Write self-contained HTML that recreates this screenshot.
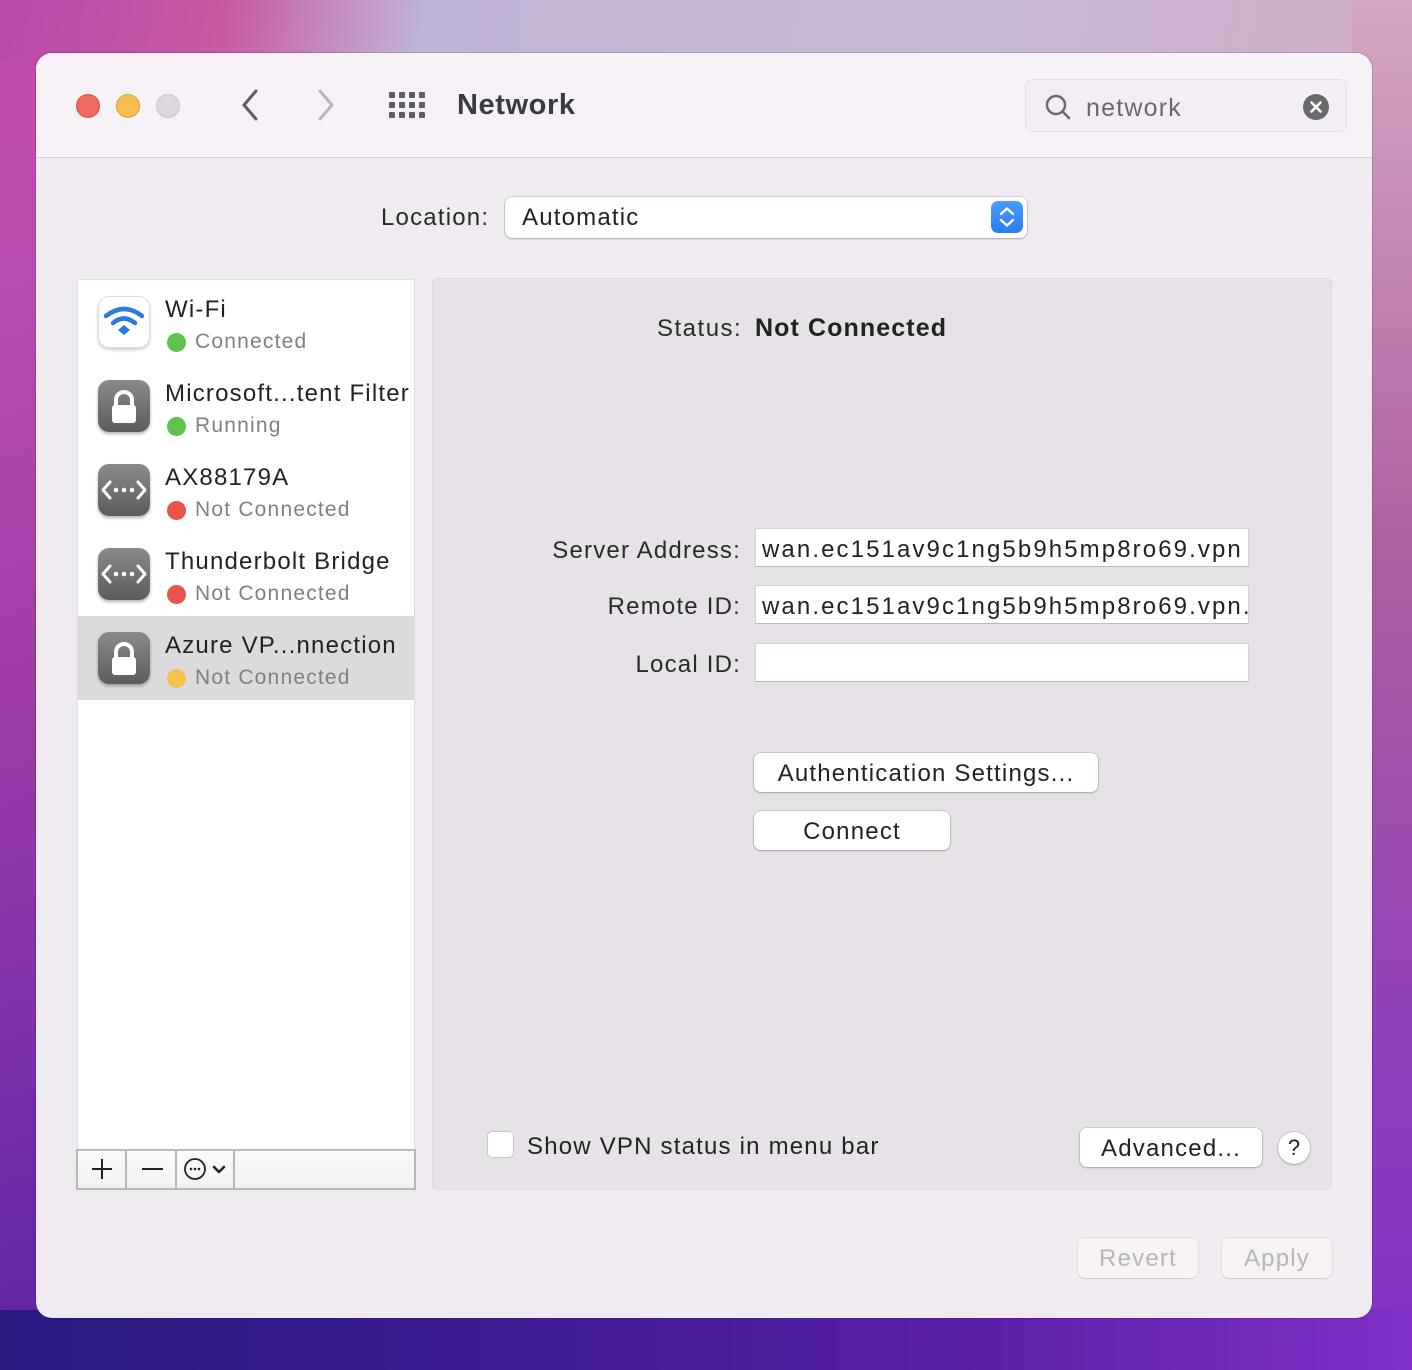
<!DOCTYPE html>
<html><head><meta charset="utf-8"><style>
*{margin:0;padding:0;box-sizing:border-box}
body{width:1412px;height:1370px;overflow:hidden;position:relative;font-family:"Liberation Sans",sans-serif;color:#222;letter-spacing:1.2px;
background:linear-gradient(160deg,#c24aa8 0%,#b84db0 15%,#9a3aa8 40%,#6a2aa8 65%,#4a20a0 85%,#3a1a90 100%)}
.bgtop{position:absolute;left:0;top:0;width:1412px;height:60px;background:linear-gradient(100deg,#b849ad 0%,#c85aa0 16%,#c0b4d6 30%,#c8b8d4 70%,#d0acc8 100%)}
.bgr{position:absolute;right:0;top:0;width:60px;height:1370px;background:linear-gradient(180deg,#d4a8c4,#b060a0 40%,#9040b8 75%,#8030c8)}
.bgb{position:absolute;left:0;bottom:0;width:1412px;height:60px;background:linear-gradient(90deg,#2a1a80,#3a1a90 30%,#5a20a8 70%,#8030c8)}
.win{position:absolute;left:36px;top:53px;width:1336px;height:1265px;border-radius:16px;background:#efebf0;overflow:hidden;box-shadow:0 0 0 1px rgba(0,0,0,.15)}
.tb{position:absolute;left:0;top:0;width:100%;height:105px;background:#f6f0f7;border-bottom:1px solid #d4cfd6}
.abs{position:absolute}
.dot{position:absolute;width:24px;height:24px;border-radius:50%;top:41px}
.t{position:absolute;white-space:nowrap}
.sb{position:absolute;left:41px;top:226px;width:338px;height:911px;background:#fff;border:1px solid #e0dde2}
.row{position:absolute;left:0;width:336px;height:84px}
.ic{position:absolute;left:20px;top:16px;width:52px;height:52px;border-radius:11px;background:linear-gradient(#8a8a8c,#5c5c5e);box-shadow:0 2px 3px rgba(0,0,0,.3)}
.nm{position:absolute;left:87px;top:16px;font-size:24px;color:#222;white-space:nowrap}
.st{position:absolute;left:87px;top:50px;font-size:21px;color:#808080;white-space:nowrap;padding-left:30px}
.st i{position:absolute;left:2px;top:3px;width:19px;height:19px;border-radius:50%}
.panel{position:absolute;left:396px;top:225px;width:900px;height:912px;background:#e6e2e7;border:1px solid #dcd8dd;border-radius:6px}
.fld{position:absolute;left:322px;width:494px;height:39px;background:#fff;border:1px solid #d5d2d6;border-bottom-color:#bdbabd;font-size:24px;padding:7px 6px;overflow:hidden;white-space:nowrap;color:#222;letter-spacing:2.1px}
.lbl{position:absolute;right:590px;font-size:24px;color:#2a2a2a;white-space:nowrap}
.btn{position:absolute;background:#fff;border-radius:7px;box-shadow:0 0 0 1px rgba(0,0,0,.1),0 1px 2px rgba(0,0,0,.2);font-size:24px;text-align:center;color:#222}
</style></head><body>
<div class="bgtop"></div><div class="bgr"></div><div class="bgb"></div>
<div class="win">
 <div class="tb">
  <div class="dot" style="left:40px;background:#ec6a5e;border:1px solid #d25548"></div>
  <div class="dot" style="left:80px;background:#f5bf4f;border:1px solid #d6a03a"></div>
  <div class="dot" style="left:120px;background:#dcd8dd;border:1px solid #c8c4c9"></div>
  <svg class="abs" style="left:200px;top:34px" width="30" height="36"><path d="M20 4 L8 18 L20 32" stroke="#5e5c60" stroke-width="3" fill="none" stroke-linecap="round" stroke-linejoin="round"/></svg>
  <svg class="abs" style="left:276px;top:34px" width="30" height="36"><path d="M8 4 L20 18 L8 32" stroke="#b8b5ba" stroke-width="3" fill="none" stroke-linecap="round" stroke-linejoin="round"/></svg>
  <svg class="abs" style="left:353px;top:39px" width="40" height="30" fill="#5e5c60">
   <rect x="0" y="0" width="6" height="6" rx="1"/><rect x="10" y="0" width="6" height="6" rx="1"/><rect x="20" y="0" width="6" height="6" rx="1"/><rect x="30" y="0" width="6" height="6" rx="1"/>
   <rect x="0" y="10" width="6" height="6" rx="1"/><rect x="10" y="10" width="6" height="6" rx="1"/><rect x="20" y="10" width="6" height="6" rx="1"/><rect x="30" y="10" width="6" height="6" rx="1"/>
   <rect x="0" y="20" width="6" height="6" rx="1"/><rect x="10" y="20" width="6" height="6" rx="1"/><rect x="20" y="20" width="6" height="6" rx="1"/><rect x="30" y="20" width="6" height="6" rx="1"/></svg>
  <div class="t" style="left:421px;top:36px;font-size:29px;font-weight:bold;color:#3c3a3e;letter-spacing:0.6px">Network</div>
  <div class="abs" style="left:989px;top:26px;width:322px;height:53px;border:1px solid #e2dce4;border-radius:8px;background:#f3edf4"></div>
  <svg class="abs" style="left:1008px;top:40px" width="30" height="30"><circle cx="12" cy="12" r="9" stroke="#6a686c" stroke-width="2.4" fill="none"/><path d="M18.5 18.5 L25 25" stroke="#6a686c" stroke-width="2.6" stroke-linecap="round"/></svg>
  <div class="t" style="left:1050px;top:41px;font-size:25px;color:#6a686c">network</div>
  <svg class="abs" style="left:1266px;top:40px" width="28" height="28"><circle cx="14" cy="14" r="13" fill="#6a686c"/><path d="M9.5 9.5 L18.5 18.5 M18.5 9.5 L9.5 18.5" stroke="#fff" stroke-width="2.6" stroke-linecap="round"/></svg>
 </div>
 <div class="t" style="left:345px;top:151px;font-size:24px;color:#2a2a2a">Location:</div>
 <div class="abs" style="left:469px;top:144px;width:522px;height:41px;background:#fff;border-radius:7px;box-shadow:0 0 0 1px rgba(0,0,0,.1),0 1px 2px rgba(0,0,0,.2)"></div>
 <div class="t" style="left:486px;top:151px;font-size:24px;color:#222">Automatic</div>
 <div class="abs" style="left:955px;top:148px;width:32px;height:32px;border-radius:7px;background:linear-gradient(#4a9cff,#2a7cf2)"></div>
 <svg class="abs" style="left:955px;top:148px" width="32" height="32"><path d="M10 13 L16 7.5 L22 13 M10 19 L16 24.5 L22 19" stroke="#fff" stroke-width="2.4" fill="none" stroke-linecap="round" stroke-linejoin="round"/></svg>

 <div class="sb">
  <div class="row" style="top:0">
   <div class="ic" style="background:#fff;border:1px solid #ddd;box-shadow:0 2px 3px rgba(0,0,0,.2)"></div>
   <svg class="abs" style="left:24px;top:24px" width="44" height="38"><path d="M4 12 Q22 -2 40 12" stroke="#2a7ae6" stroke-width="4.5" fill="none" stroke-linecap="round"/><path d="M11 19 Q22 10 33 19" stroke="#2a7ae6" stroke-width="4.5" fill="none" stroke-linecap="round"/><path d="M16 26 L22 21 L28 26 L22 31Z" fill="#2a7ae6"/></svg>
   <div class="nm">Wi-Fi</div><div class="st"><i style="background:#5ec34d"></i>Connected</div>
  </div>
  <div class="row" style="top:84px">
   <div class="ic"></div>
   <svg class="abs" style="left:20px;top:16px" width="52" height="52"><path d="M18 26 V20 a8 8 0 0 1 16 0 V26" stroke="#fff" stroke-width="4" fill="none"/><rect x="14" y="25" width="24" height="18" rx="3" fill="#fff"/></svg>
   <div class="nm">Microsoft...tent Filter</div><div class="st"><i style="background:#5ec34d"></i>Running</div>
  </div>
  <div class="row" style="top:168px">
   <div class="ic"></div>
   <svg class="abs" style="left:20px;top:16px" width="52" height="52"><path d="M12 18 L5 26 L12 34 M40 18 L47 26 L40 34" stroke="#fff" stroke-width="3" fill="none" stroke-linecap="round" stroke-linejoin="round"/><circle cx="18" cy="26" r="2.3" fill="#fff"/><circle cx="26" cy="26" r="2.3" fill="#fff"/><circle cx="34" cy="26" r="2.3" fill="#fff"/></svg>
   <div class="nm">AX88179A</div><div class="st"><i style="background:#e8534a"></i>Not Connected</div>
  </div>
  <div class="row" style="top:252px">
   <div class="ic"></div>
   <svg class="abs" style="left:20px;top:16px" width="52" height="52"><path d="M12 18 L5 26 L12 34 M40 18 L47 26 L40 34" stroke="#fff" stroke-width="3" fill="none" stroke-linecap="round" stroke-linejoin="round"/><circle cx="18" cy="26" r="2.3" fill="#fff"/><circle cx="26" cy="26" r="2.3" fill="#fff"/><circle cx="34" cy="26" r="2.3" fill="#fff"/></svg>
   <div class="nm">Thunderbolt Bridge</div><div class="st"><i style="background:#e8534a"></i>Not Connected</div>
  </div>
  <div class="row" style="top:336px;background:#dcdadc">
   <div class="ic"></div>
   <svg class="abs" style="left:20px;top:16px" width="52" height="52"><path d="M18 26 V20 a8 8 0 0 1 16 0 V26" stroke="#fff" stroke-width="4" fill="none"/><rect x="14" y="25" width="24" height="18" rx="3" fill="#fff"/></svg>
   <div class="nm">Azure VP...nnection</div><div class="st"><i style="background:#f4c04e"></i>Not Connected</div>
  </div>
 </div>
 <div class="abs" style="left:40px;top:1096px;width:340px;height:41px;background:linear-gradient(#fafafa,#f2f2f2);border:2px solid #b8b8b8"></div>
 <div class="abs" style="left:89px;top:1096px;width:2px;height:41px;background:#b8b8b8"></div>
 <div class="abs" style="left:139px;top:1096px;width:2px;height:41px;background:#b8b8b8"></div>
 <div class="abs" style="left:197px;top:1096px;width:2px;height:41px;background:#b8b8b8"></div>
 <svg class="abs" style="left:54px;top:1104px" width="24" height="24"><path d="M12 2 V22 M2 12 H22" stroke="#222" stroke-width="2"/></svg>
 <svg class="abs" style="left:104px;top:1104px" width="24" height="24"><path d="M2 12 H23" stroke="#222" stroke-width="2"/></svg>
 <svg class="abs" style="left:146px;top:1103px" width="50" height="26"><circle cx="13" cy="13" r="10" stroke="#222" stroke-width="1.8" fill="none"/><circle cx="9" cy="13" r="1.3" fill="#222"/><circle cx="13" cy="13" r="1.3" fill="#222"/><circle cx="17" cy="13" r="1.3" fill="#222"/><path d="M32 11 L37 16 L42 11" stroke="#222" stroke-width="2.6" fill="none" stroke-linecap="round" stroke-linejoin="round"/></svg>

 <div class="panel">
  <div class="t" style="left:224px;top:36px;font-size:24px;color:#2a2a2a;letter-spacing:1.5px">Status:</div>
  <div class="t" style="left:322px;top:35px;font-size:25px;font-weight:bold;color:#222;letter-spacing:1.1px">Not Connected</div>
  <div class="lbl" style="top:258px">Server Address:</div>
  <div class="fld" style="top:249px">wan.ec151av9c1ng5b9h5mp8ro69.vpn</div>
  <div class="lbl" style="top:314px">Remote ID:</div>
  <div class="fld" style="top:306px">wan.ec151av9c1ng5b9h5mp8ro69.vpn.azure</div>
  <div class="lbl" style="top:372px">Local ID:</div>
  <div class="fld" style="top:364px"></div>
  <div class="btn" style="left:321px;top:474px;width:344px;height:39px;line-height:41px">Authentication Settings...</div>
  <div class="btn" style="left:321px;top:532px;width:196px;height:39px;line-height:41px">Connect</div>
  <div class="abs" style="left:54px;top:852px;width:27px;height:27px;border-radius:5px;background:#fff;border:1px solid #c9c6ca"></div>
  <div class="t" style="left:94px;top:854px;font-size:24px;color:#222">Show VPN status in menu bar</div>
  <div class="btn" style="left:647px;top:849px;width:182px;height:39px;line-height:41px">Advanced...</div>
  <div class="btn" style="left:845px;top:853px;width:32px;height:32px;border-radius:50%;line-height:32px;font-size:22px;letter-spacing:0">?</div>
 </div>
 <div class="btn" style="left:1042px;top:1185px;width:120px;height:40px;line-height:42px;background:#f6f2f6;color:#b8b6b9;box-shadow:0 0 0 1px rgba(0,0,0,.06),0 1px 1px rgba(0,0,0,.08)">Revert</div>
 <div class="btn" style="left:1186px;top:1185px;width:110px;height:40px;line-height:42px;background:#f6f2f6;color:#b8b6b9;box-shadow:0 0 0 1px rgba(0,0,0,.06),0 1px 1px rgba(0,0,0,.08)">Apply</div>
</div>
</body></html>
